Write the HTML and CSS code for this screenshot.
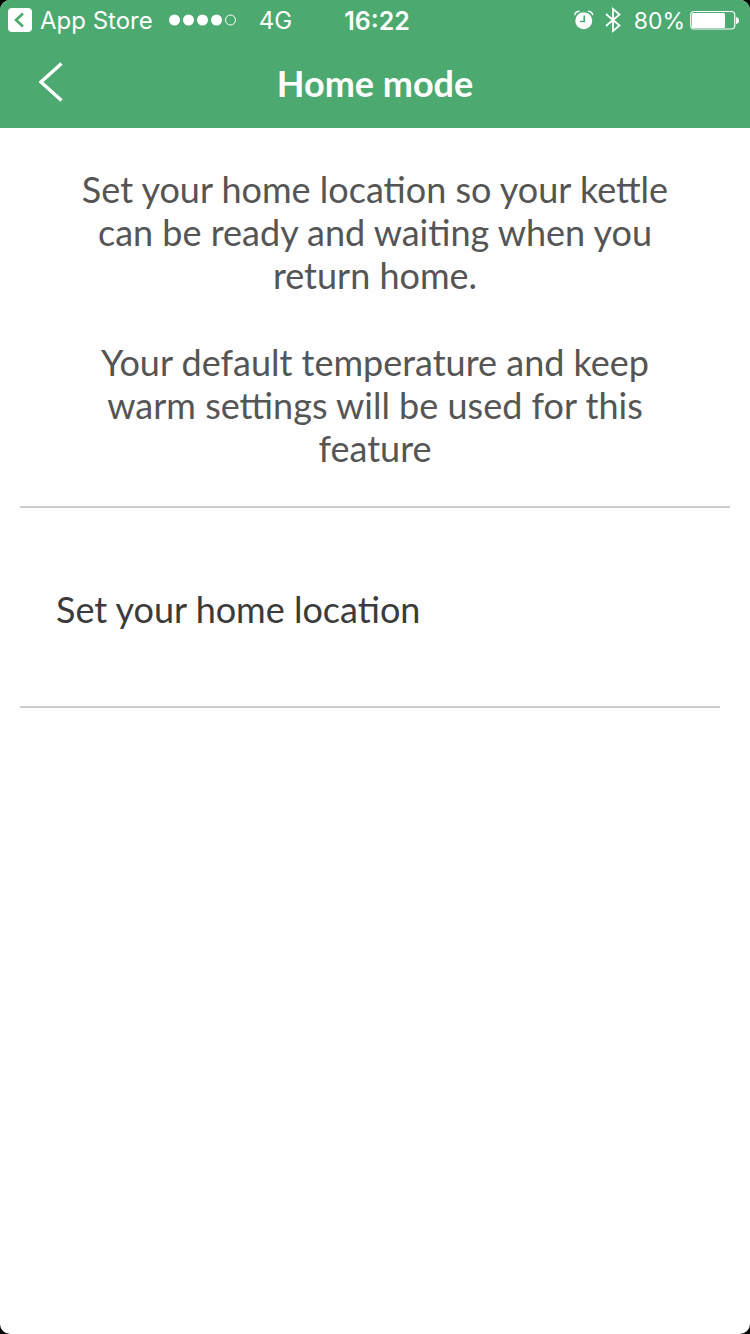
FILE: index.html
```html
<!DOCTYPE html>
<html lang="en">
<head>
<meta charset="utf-8">
<meta name="viewport" content="width=device-width, initial-scale=1">
<title>Home mode</title>
<link rel="stylesheet" href="styles.css">
</head>
<body>
<div class="screen">
  <header class="header">
    <div class="status">
      <div class="status-left">
        <a class="return-link" href="#">
          <svg width="24" height="24" viewBox="0 0 24 24" aria-hidden="true"><rect width="24" height="24" rx="4" fill="#fff"/><path d="M15 5.500 8 12l7 6.500" fill="none" stroke="#4ca96f" stroke-width="2.600"/></svg>
          <span class="status-text">App Store</span>
        </a>
        <svg class="signal" width="68" height="12" viewBox="0 0 68 12" role="img" aria-label="Signal strength 4 of 5"><g fill="#fff"><circle cx="5.500" cy="6" r="5.500"/><circle cx="19.500" cy="6" r="5.500"/><circle cx="33.500" cy="6" r="5.500"/><circle cx="47.500" cy="6" r="5.500"/></g><circle cx="61.500" cy="6" r="5" fill="none" stroke="#fff"/></svg>
        <span class="status-text">4G</span>
      </div>
      <time class="clock status-text">16:22</time>
      <div class="status-right">
        <svg class="alarm" width="20" height="20" viewBox="0 0 20 20" role="img" aria-label="Alarm set"><path d="M.8 5.300Q1 1.600 5.500 1.300M18.700 5.300Q18.500 1.600 14 1.300" fill="none" stroke="#fff" stroke-width="1.500"/><circle cx="9.750" cy="10.800" r="8.500" fill="#fff"/><path d="M10.300 5.500v6H6" fill="none" stroke="#4ca96f" stroke-width="1.700"/></svg>
        <svg class="bluetooth" width="16" height="28" viewBox="0 0 16 28" role="img" aria-label="Bluetooth on"><path d="M1 8 14.500 19.500 8 25V3L14.500 8.500 1 20" fill="none" stroke="#fff" stroke-width="1.800"/></svg>
        <span class="level status-text">80%</span>
        <svg class="battery" width="50" height="20" viewBox="0 0 50 20" aria-hidden="true"><rect x=".75" y="1.500" width="44" height="17.500" rx="3.500" fill="none" stroke="#fff" stroke-width="1.200"/><rect x="2" y="3" width="33" height="15" rx="1.500" fill="#fff"/><path d="M46 7q3 .5 3 3.500t-3 3.500z" fill="#fff"/></svg>
      </div>
    </div>
    <nav class="navbar">
      <button class="back" type="button" aria-label="Back"><svg width="24" height="40" viewBox="0 0 24 40" aria-hidden="true"><path d="M22.500 1.500 2 20l20.500 18.500" fill="none" stroke="#fff" stroke-width="3.400"/></svg></button>
      <h1 class="title">Home mode</h1>
    </nav>
  </header>
  <main class="content">
    <section class="intro">
      <p>Set your home location so your kettle can be ready and waiting when you return home.</p>
      <p>Your default temperature and keep warm settings will be used for this feature</p>
    </section>
    <button class="row" type="button">Set your home location</button>
  </main>
</div>
</body>
</html>
```

FILE: styles.css
```css
* {
  box-sizing: border-box;
}

body {
  margin: 0;
  background: #000;
  font-family: Lato, sans-serif;
  font-size: 36px;
  line-height: 1.2;
  color: #555;
}

.screen {
  min-height: 100vh;
  background: #fefefe;
  border-radius: 10px;
  overflow: hidden;
}

.header {
  background: #4ca96f;
  color: #fff;
}

.status {
  display: grid;
  grid-template-columns: 1fr auto 1fr;
  align-items: center;
  height: 40px;
  padding: 0 10px 0 14px;
  font-family: Inter, sans-serif;
  font-size: 24px;
  line-height: 36px;
}

.status-left,
.status-right,
.return-link {
  display: flex;
  align-items: center;
}

.status-left {
  margin-left: -6px;
}

.status-right {
  justify-content: flex-end;
}

.status-text {
  padding-top: 2px;
}

.return-link {
  gap: 8px;
  color: inherit;
  text-decoration: none;
}

.signal {
  margin: 0 22px 0 16px;
}

.clock {
  font-size: 25px;
  font-weight: 600;
}

.alarm {
  margin-right: 11px;
}

.bluetooth {
  margin-right: 13px;
}

.level {
  font-size: 23px;
}

.battery {
  margin-left: 5px;
}

.navbar {
  display: grid;
  grid-template-columns: 100px 1fr 100px;
  align-items: center;
  height: 88px;
}

.back {
  display: flex;
  padding: 0 0 4px 39px;
  border: 0;
  background: none;
}

.title {
  margin: 0;
  font-size: 36px;
  font-weight: 700;
  text-align: center;
}

.content {
  padding: 0 20px;
}

.intro {
  padding: 40px 50px 36px;
  border-bottom: 2px solid #ccc;
  text-align: center;
}

.intro p {
  margin: 0;
}

.intro p + p {
  margin-top: 43px;
}

.row {
  display: block;
  width: calc(100% - 10px);
  height: 200px;
  padding: 4px 36px 0;
  border: 0;
  border-bottom: 2px solid #ccc;
  background: none;
  color: #3b3b3b;
  font: inherit;
  text-align: left;
}
```
